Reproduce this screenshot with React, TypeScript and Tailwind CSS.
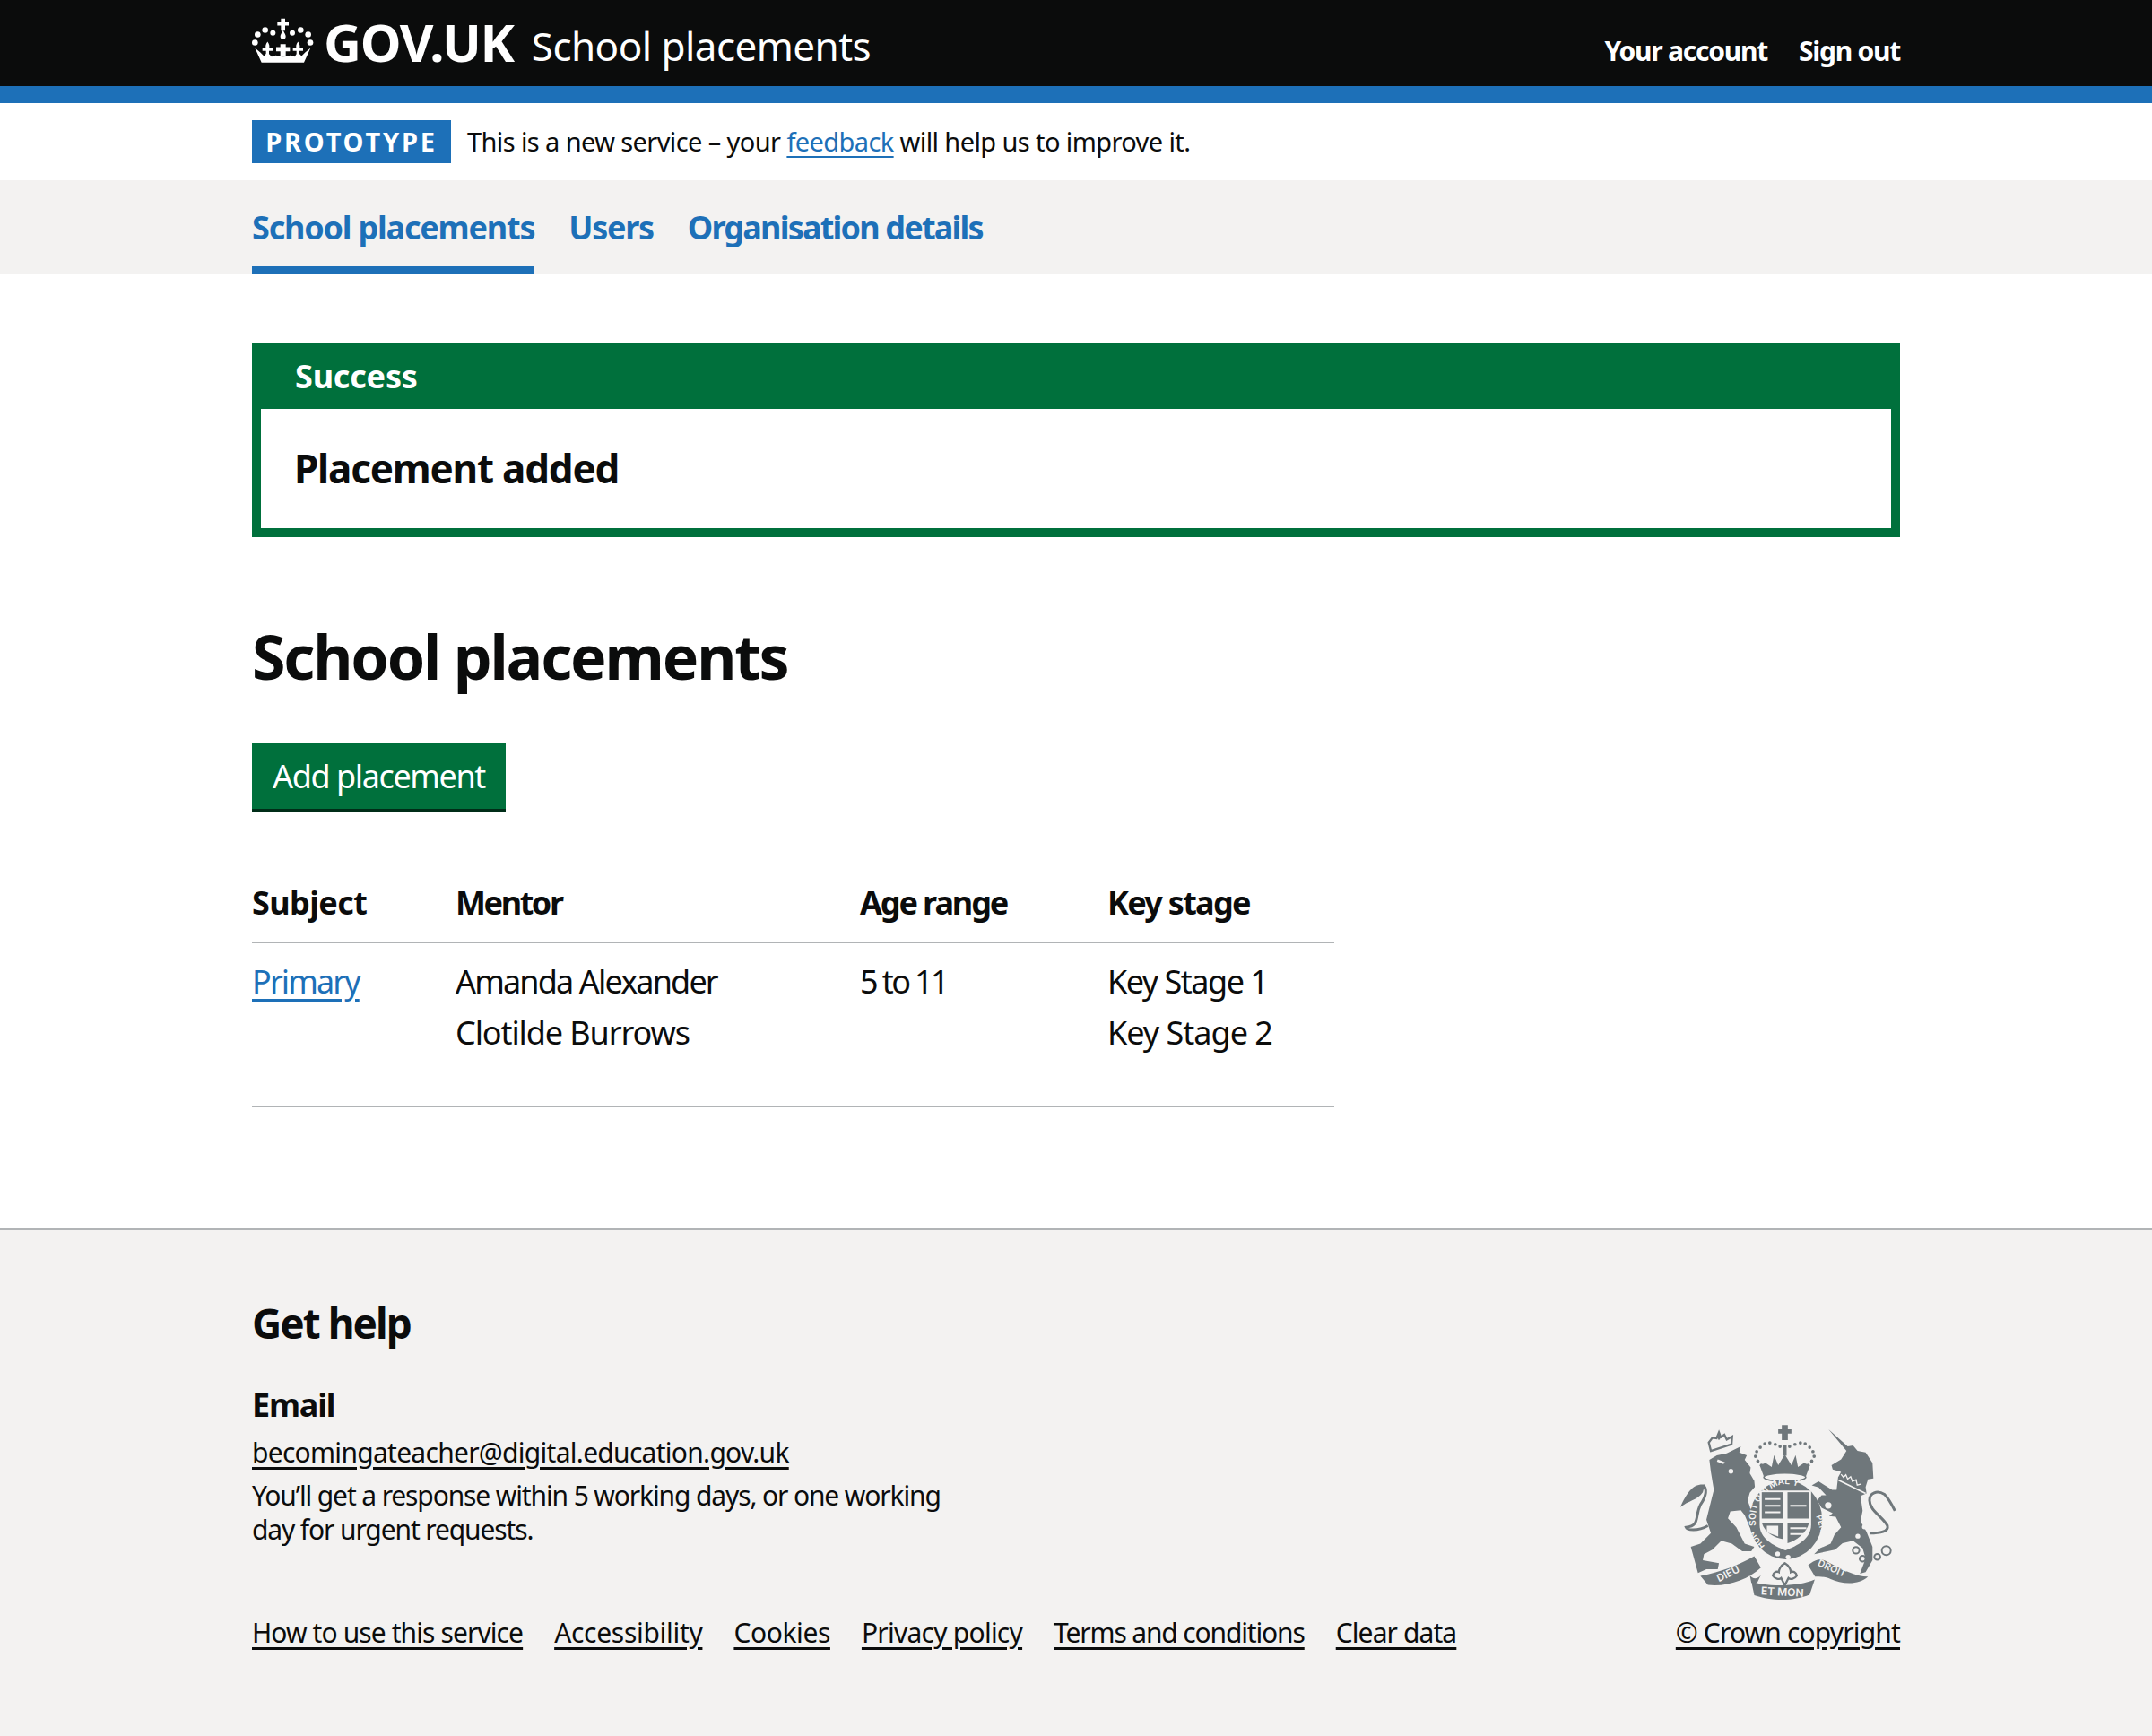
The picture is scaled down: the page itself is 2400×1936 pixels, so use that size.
import React from 'react';

const footerLinks = [
	{ label: 'How to use this service', tracking: 'tracking-[-0.9px]' },
	{ label: 'Accessibility', tracking: 'tracking-[-0.3px]' },
	{ label: 'Cookies', tracking: 'tracking-[-0.4px]' },
	{ label: 'Privacy policy', tracking: 'tracking-[-0.75px]' },
	{ label: 'Terms and conditions', tracking: 'tracking-[-1.15px]' },
	{ label: 'Clear data', tracking: 'tracking-[-0.9px]' },
];

const CrownLogo = () => (
	<svg viewBox="18 10 210 155" className="w-[70px] h-[52px] shrink-0 -mt-[4px]" fill="#fff">
		<path d="M115 15h14v10h12v13h-12v17h-14V38h-12V25h12z" />
		<path d="M122 54c5 10 9 14 9 21a9 9 0 0 1-18 0c0-7 4-11 9-21z" />
		{[[88, 63, 9], [62, 53, 10], [37, 68, 10], [28, 95, 10], [153, 63, 9], [181, 53, 10], [206, 68, 10], [213, 95, 10]].map(([cx, cy, r]) => (
			<circle key={cx} cx={cx} cy={cy} r={r} />
		))}
		<path d="M28 113L46 128 58 140 70 128 84 142 98 138 122 144 146 138 160 142 172 128 184 140 196 128 214 113 192 162H50z" />
		<path d="M70 92c6 8 8 16 5 22h12v9H75v18H65v-18H53v-9h12c-3-6-1-14 5-22z" />
		<path d="M172 92c6 8 8 16 5 22h12v9h-12v18h-10v-18h-12v-9h12c-3-6-1-14 5-22z" />
		<path d="M113 100h18v10h14v14h-14v20h-18v-20H99v-14h14z" />
	</svg>
);

const RoyalArms = () => (
	<svg viewBox="100 80 725 590" className="w-[242px] h-[197px]" fill="#6f777b">
		{/* lion */}
		<path d="M200 200L225 185 258 178 305 155 300 175 325 185 318 200 338 225 335 245 350 270 352 290 335 310 328 335 345 385 362 410 355 428 335 425 318 385 305 368 270 372 262 395 290 425 318 480 350 490 340 505 310 505 275 480 240 470 210 500 182 515 178 535 232 545 228 565 190 565 162 578 138 490 170 480 205 445 190 400 215 300 205 240Z" />
		<path d="M195 420C160 440 125 435 122 425 170 420 150 390 170 350 190 320 195 300 180 285" fill="none" stroke="#6f777b" strokeWidth="9" />
		<path d="M185 283C145 278 125 310 103 358 130 335 160 335 178 308Z" />
		<path d="M205 170L274 148 276 122 258 132 250 116 238 124 232 108 224 128 210 126 198 142Z" fill="none" stroke="#6f777b" strokeWidth="7" />
		<path d="M224 124h16M232 112v20" stroke="#6f777b" strokeWidth="6" />
		<circle cx="272" cy="238" r="8" fill="#f3f2f1" />
		<path d="M228 198l24 10-5 6-22-8z" fill="#f3f2f1" />
		{/* unicorn */}
		<path d="M598 98L662 155 680 152 695 170 722 175 745 210 748 262 730 265 722 290 725 312 705 320 712 370 705 405 725 440 745 490 745 535 722 575 703 580 722 530 712 495 680 470 645 478 620 500 550 515 570 495 605 480 618 450 640 425 622 390 600 388 612 378 575 360 560 335 575 318 590 318 565 292 542 285 565 272 610 300 625 300 630 258 640 240 612 232 608 218 640 198 658 170Z" />
		<path d="M735 445C770 445 800 440 795 420 780 390 735 370 735 335 735 310 760 300 785 315 800 330 810 350 820 370" fill="none" stroke="#6f777b" strokeWidth="9" />
		<path d="M632 268L722 312" stroke="#f3f2f1" strokeWidth="5" />
		<path d="M640 248l8 10 8-8 6 14 10-8 6 16 12-6 4 18 14-4" fill="none" stroke="#f3f2f1" strokeWidth="4" />
		<circle cx="608" cy="274" r="9" fill="#f3f2f1" />
		<circle cx="597" cy="352" r="11" fill="#f3f2f1" />
		<circle cx="727" cy="376" r="10" fill="#f3f2f1" />
		<circle cx="718" cy="424" r="8" fill="#f3f2f1" />
		<circle cx="696" cy="455" r="8" fill="#f3f2f1" />
		<g fill="none" stroke="#6f777b" strokeWidth="6">
			<circle cx="690" cy="502" r="11" />
			<circle cx="712" cy="530" r="10" />
			<circle cx="761" cy="524" r="10" />
			<circle cx="791" cy="503" r="15" />
		</g>
		{/* crown */}
		<path d="M442 84h20v14h12v14h-12v22h-20v-22h-12V98h12z" />
		<path d="M446 150h12v36h-12z" />
		<g>
			{[[370, 158], [385, 146], [402, 143], [420, 148], [436, 155], [468, 155], [486, 148], [504, 143], [520, 146], [535, 158], [358, 172], [546, 172], [354, 188], [550, 188], [362, 204], [542, 204], [374, 218], [530, 218]].map(([cx, cy]) => (
				<circle key={`${cx}-${cy}`} cx={cx} cy={cy} r="5.5" />
			))}
		</g>
		<path d="M368 218l20-8 20 14 8-40 14 34 22-36 22 36 14-34 8 40 20-14 20 8-14 38H382z" />
		<ellipse cx="452" cy="258" rx="70" ry="14" fill="#f3f2f1" stroke="#6f777b" strokeWidth="5" />
		{/* shield and garter */}
		<ellipse cx="455" cy="400" rx="122" ry="132" />
		<path id="garter-top" d="M356 420A102 118 0 1 1 552 440" fill="none" />
		<text fontFamily="Inter, sans-serif" fontSize="30" fontWeight="600" fill="#f3f2f1"><textPath href="#garter-top">SOIT QUI MAL Y</textPath></text>
		<text transform="translate(556 388) rotate(72)" fontFamily="Inter, sans-serif" fontSize="28" fontWeight="600" fill="#f3f2f1">PENSE</text>
		<text transform="translate(385 488) rotate(-128)" fontFamily="Inter, sans-serif" fontSize="28" fontWeight="600" fill="#f3f2f1">HON</text>
		<path d="M368 302h172v115c0 45-45 70-86 85-41-15-86-40-86-85z" fill="#f3f2f1" />
		<path d="M375 308h72v88h-72z" />
		<path d="M461 308h72v88h-72z" />
		<path d="M375 410h72v55c-28-6-60-18-72-55z" />
		<path d="M461 410h72c-8 35-44 60-72 68z" />
		<path d="M385 328h52v6h-52zm0 22h52v6h-52zm0 22h52v6h-52zM470 350h54v6h-54zM470 425h54v6h-54zm0 20h44v6h-44z" fill="#f3f2f1" />
		<path d="M392 420l38 0 0 36-38-14z" fill="#f3f2f1" />
		<circle cx="428" cy="514" r="8" fill="#f3f2f1" />
		<circle cx="463" cy="525" r="8" fill="#f3f2f1" />
		{/* motto ribbon */}
		<path d="M170 588C240 575 300 550 350 522L372 560C330 600 260 625 195 618Z" />
		<path d="M530 552C555 530 575 530 590 538 640 565 690 590 730 590 700 620 640 615 605 598 590 590 565 590 553 590Z" />
		<path d="M340 605C380 625 500 625 552 600L535 650C480 675 400 670 350 652Z" />
		<path d="M335 585C345 600 360 600 372 585L360 610H340Z" />
		<path d="M452 545c14 8 20 22 20 30 8-4 18 0 20 12-6 10-22 14-28 8l-12 24-12-24c-6 6-22 2-28-8 2-12 12-16 20-12 0-8 6-22 20-30z" fill="none" stroke="#6f777b" strokeWidth="7" />
		<text transform="translate(232 608) rotate(-26)" fontFamily="Inter, sans-serif" fontSize="34" fontWeight="600" fill="#f3f2f1">DIEU</text>
		<text transform="translate(372 650) rotate(3)" fontFamily="Inter, sans-serif" fontSize="36" fontWeight="600" fill="#f3f2f1">ET MON</text>
		<text transform="translate(560 552) rotate(24)" fontFamily="Inter, sans-serif" fontSize="32" fontWeight="600" fill="#f3f2f1">DROIT</text>
	</svg>
);

const App = () => {
	return (
		<div className="min-h-[1936px] flex flex-col bg-white text-[#0b0c0c] font-['Noto_Sans',sans-serif]">
			<header className="bg-[#0b0c0c] border-b-[19px] border-[#1d70b8]">
				<div className="w-[1838px] mx-auto h-[96px] flex items-start justify-between">
					<div className="flex items-center h-[96px] pb-[2px]">
						<CrownLogo />
						<span className="ml-[10px] text-[58px] leading-none font-bold text-white tracking-[-1.3px]">GOV.UK</span>
						<span className="ml-[20px] mt-[8px] text-[44px] leading-none text-white tracking-[-0.55px]">School placements</span>
					</div>
					<nav className="flex gap-[35px] mt-[38px] text-[30px] leading-[38px] font-bold text-white tracking-[-1.25px]">
						<a>Your account</a>
						<a>Sign out</a>
					</nav>
				</div>
			</header>

			<div className="h-[86px]">
				<div className="w-[1838px] mx-auto flex items-center h-full gap-[18px]">
					<strong className="bg-[#1d70b8] text-white h-[48px] w-[222px] flex items-center justify-center text-[29px] font-bold tracking-[2.8px]">PROTOTYPE</strong>
					<p className="text-[29px] leading-[40px] tracking-[-0.6px]">
						This is a new service – your <a className="text-[#1d70b8] underline underline-offset-[5px]">feedback</a> will help us to improve it.
					</p>
				</div>
			</div>

			<nav className="bg-[#f3f2f1] h-[105px]">
				<div className="w-[1838px] mx-auto flex gap-[38px] h-full text-[36px] font-bold text-[#1d70b8]">
					<a className="border-b-[9px] border-[#1d70b8] pt-[30px] leading-[46px] tracking-[-1.2px]">School placements</a>
					<a className="pt-[30px] leading-[46px] tracking-[-1.3px]">Users</a>
					<a className="pt-[30px] leading-[46px] tracking-[-1.8px]">Organisation details</a>
				</div>
			</nav>

			<main className="w-[1838px] mx-auto pt-[77px] flex-1">
				<section className="border-[10px] border-[#00703c] bg-white">
					<h2 className="bg-[#00703c] text-white text-[36px] font-bold leading-[46px] h-[64px] pl-[38px] -mt-[1px] pt-[5px] tracking-[-0.2px]">Success</h2>
					<p className="h-[133px] flex items-center pb-[1px] pl-[37px] text-[44px] font-bold tracking-[-1.2px]">Placement added</p>
				</section>

				<h1 className="mt-[86px] text-[68px] leading-[94px] font-bold tracking-[-2.15px]">School placements</h1>

				<button className="mt-[50px] block bg-[#00703c] text-white w-[283px] h-[77px] border-b-[4px] border-[#002d18] text-[36px] leading-none tracking-[-1.4px]">Add placement</button>

				<table className="mt-[63px] w-[1207px] text-[36px] border-collapse table-fixed">
					<colgroup>
						<col className="w-[227px]" />
						<col className="w-[451px]" />
						<col className="w-[276px]" />
						<col />
					</colgroup>
					<thead>
						<tr className="border-b-2 border-[#b1b4b6] h-[82px] text-left align-middle">
							<th className="font-bold pb-[5px] tracking-[-0.6px]">Subject</th>
							<th className="font-bold pb-[5px] tracking-[-2.4px]">Mentor</th>
							<th className="font-bold pb-[5px] tracking-[-2.1px]">Age range</th>
							<th className="font-bold pb-[5px] tracking-[-1.7px]">Key stage</th>
						</tr>
					</thead>
					<tbody>
						<tr className="border-b-2 border-[#b1b4b6] align-top leading-[57px]">
							<td className="pt-[14px] pb-[53px] tracking-[-1.9px]"><a className="text-[#1d70b8] underline underline-offset-[6px]">Primary</a></td>
							<td className="pt-[14px] pb-[53px]">
								<span className="tracking-[-1.85px]">Amanda Alexander</span><br />
								<span className="tracking-[-1.1px]">Clotilde Burrows</span>
							</td>
							<td className="pt-[14px] pb-[53px] tracking-[-2.6px]">5 to 11</td>
							<td className="pt-[14px] pb-[53px]">
								<span className="tracking-[-1.5px]">Key Stage 1</span><br />
								<span className="tracking-[-1px]">Key Stage 2</span>
							</td>
						</tr>
					</tbody>
				</table>
			</main>

			<footer className="bg-[#f3f2f1] border-t-2 border-[#b1b4b6] h-[566px]">
				<div className="w-[1838px] mx-auto pt-[75px] relative">
					<h2 className="text-[46px] leading-[56px] font-bold tracking-[-2px]">Get help</h2>
					<h3 className="mt-[41px] text-[36px] leading-[46px] font-bold tracking-[-1.2px]">Email</h3>
					<a className="block mt-[10px] text-[30px] leading-[40px] underline underline-offset-[5px] tracking-[-0.72px]">becomingateacher@digital.education.gov.uk</a>
					<p className="mt-[9px] w-[800px] text-[30px] leading-[38px] tracking-[-1.13px]">You’ll get a response within 5 working days, or one working day for urgent requests.</p>
					<div className="mt-[76px] flex justify-between items-end text-[30px] leading-[40px]">
						<ul className="flex gap-[35px]">
							{footerLinks.map((link) => (
								<li key={link.label}><a className={`underline underline-offset-[5px] ${link.tracking}`}>{link.label}</a></li>
							))}
						</ul>
						<div className="flex flex-col items-end">
							<div className="absolute right-[4px] top-[216px]"><RoyalArms /></div>
							<a className="underline underline-offset-[5px] tracking-[-0.85px]">© Crown copyright</a>
						</div>
					</div>
				</div>
			</footer>
		</div>
	);
};

export default App;
